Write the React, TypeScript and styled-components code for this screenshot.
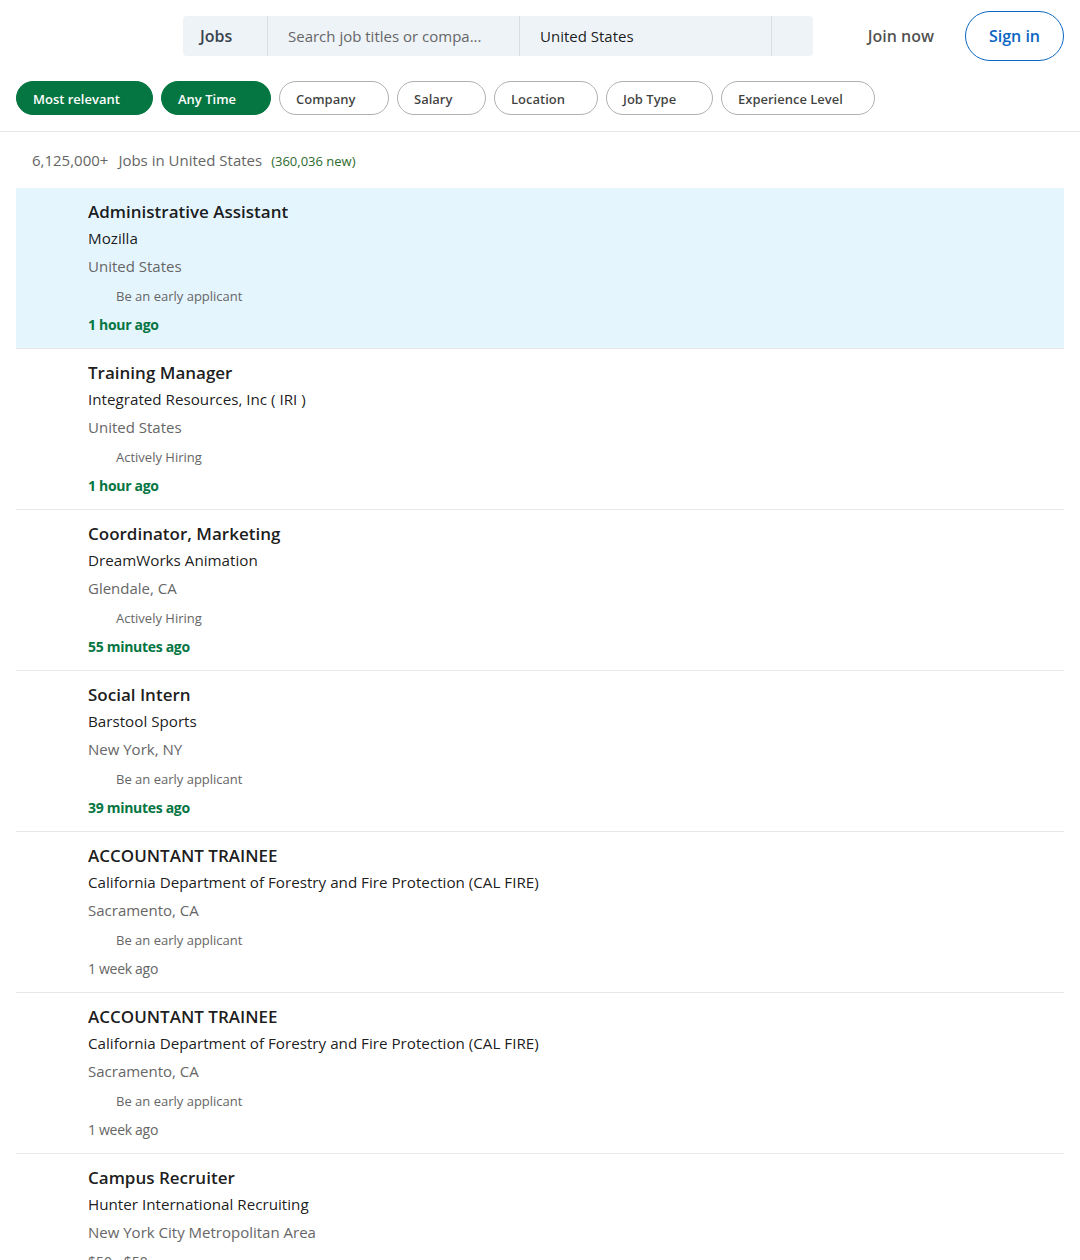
import React from "react";
import styled, { createGlobalStyle } from "styled-components";

const Global = createGlobalStyle`
  html, body { margin: 0; padding: 0; background: #fff; }
  body { font-family: "Open Sans", "Noto Sans", sans-serif; color: rgba(0,0,0,0.9); }
  * { box-sizing: border-box; }
`;

const Header = styled.header`
  display: flex;
  align-items: center;
  height: 72px;
  padding: 0 16px 0 183px;
`;

const SearchBar = styled.div`
  display: flex;
  width: 630px;
  height: 40px;
  background: #eef3f8;
  border-radius: 4px;
`;

const Segment = styled.div<{ $w: number; $pad: number; $last?: boolean }>`
  display: flex;
  align-items: center;
  width: ${(p) => p.$w}px;
  padding-left: ${(p) => p.$pad}px;
  border-right: ${(p) => (p.$last ? "none" : "1px solid #d9dde1")};
  font-size: 15px;
  white-space: nowrap;
`;

const JobsLabel = styled.span`
  font-size: 16px;
  font-weight: 600;
  color: #38434f;
`;

const Placeholder = styled.span`
  color: #666;
`;

const Value = styled.span`
  color: rgba(0,0,0,0.9);
`;

const Nav = styled.nav`
  margin-left: auto;
  display: flex;
  align-items: center;
  gap: 31px;
`;

const JoinNow = styled.a`
  font-size: 16px;
  font-weight: 600;
  color: rgba(0,0,0,0.7);
  text-decoration: none;
`;

const SignIn = styled.a`
  display: flex;
  align-items: center;
  justify-content: center;
  width: 99px;
  height: 50px;
  border: 1px solid #0a66c2;
  border-radius: 25px;
  font-size: 16px;
  font-weight: 600;
  color: #0a66c2;
  text-decoration: none;
`;

const Filters = styled.div`
  display: flex;
  gap: 8px;
  padding: 9px 16px 16px;
  border-bottom: 1px solid #e8e8e8;
`;

const Pill = styled.button<{ $active?: boolean; $w: number }>`
  height: 34px;
  width: ${(p) => p.$w}px;
  border-radius: 17px;
  border: 1px solid ${(p) => (p.$active ? "#057642" : "#b0b0b0")};
  background: ${(p) => (p.$active ? "#057642" : "#fff")};
  color: ${(p) => (p.$active ? "#fff" : "rgba(0,0,0,0.75)")};
  font-family: inherit;
  font-size: 13px;
  font-weight: 600;
  text-align: left;
  padding: 1px 0 0 16px;
  cursor: pointer;
`;

const Main = styled.main`
  padding: 0 16px;
`;

const Count = styled.div`
  display: flex;
  align-items: baseline;
  padding: 16px 16px 15px;
  font-size: 15px;
  line-height: 24px;
  color: #666;
`;

const CountNum = styled.span`
  margin-right: 10px;
`;

const NewCount = styled.span`
  margin-left: 9px;
  font-size: 13px;
  color: #2d6a2d;
`;

const List = styled.ul`
  list-style: none;
  margin: 0;
  padding: 0;
`;

const Card = styled.li<{ $active?: boolean }>`
  display: flex;
  flex-direction: column;
  padding: 12px 16px 13px 72px;
  background: ${(p) => (p.$active ? "#e5f5fe" : "#fff")};
  border-bottom: 1px solid #e8e8e8;
`;

const Title = styled.h3`
  margin: 0;
  font-size: 17px;
  line-height: 24px;
  font-weight: 600;
  color: rgba(0,0,0,0.9);
`;

const Company = styled.h4`
  margin: 2px 0 0;
  font-size: 15.2px;
  line-height: 24px;
  font-weight: 400;
  color: rgba(0,0,0,0.9);
`;

const Location = styled.span`
  margin-top: 4px;
  font-size: 15px;
  line-height: 24px;
  color: #666;
`;

const Salary = styled.span`
  margin-top: 8px;
  font-size: 14px;
  line-height: 20px;
  color: #666;
`;

const Insight = styled.span`
  margin-top: 8px;
  padding-left: 28px;
  font-size: 13px;
  line-height: 20px;
  color: #666;
`;

const Time = styled.time<{ $new?: boolean }>`
  margin-top: 9px;
  font-size: 14px;
  letter-spacing: -0.3px;
  line-height: 20px;
  font-weight: ${(p) => (p.$new ? 700 : 400)};
  color: ${(p) => (p.$new ? "#057642" : "#666")};
`;

const filters = [
  { label: "Most relevant", active: true, w: 137 },
  { label: "Any Time", active: true, w: 110 },
  { label: "Company", w: 110 },
  { label: "Salary", w: 89 },
  { label: "Location", w: 104 },
  { label: "Job Type", w: 107 },
  { label: "Experience Level", w: 154 },
];

type Job = {
  title: string;
  company: string;
  location: string;
  salary?: string;
  insight: string;
  time: string;
  isNew?: boolean;
};

const jobs: Job[] = [
  { title: "Administrative Assistant", company: "Mozilla", location: "United States", insight: "Be an early applicant", time: "1 hour ago", isNew: true },
  { title: "Training Manager", company: "Integrated Resources, Inc ( IRI )", location: "United States", insight: "Actively Hiring", time: "1 hour ago", isNew: true },
  { title: "Coordinator, Marketing", company: "DreamWorks Animation", location: "Glendale, CA", insight: "Actively Hiring", time: "55 minutes ago", isNew: true },
  { title: "Social Intern", company: "Barstool Sports", location: "New York, NY", insight: "Be an early applicant", time: "39 minutes ago", isNew: true },
  { title: "ACCOUNTANT TRAINEE", company: "California Department of Forestry and Fire Protection (CAL FIRE)", location: "Sacramento, CA", insight: "Be an early applicant", time: "1 week ago" },
  { title: "ACCOUNTANT TRAINEE", company: "California Department of Forestry and Fire Protection (CAL FIRE)", location: "Sacramento, CA", insight: "Be an early applicant", time: "1 week ago" },
  { title: "Campus Recruiter", company: "Hunter International Recruiting", location: "New York City Metropolitan Area", salary: "$50 - $50", insight: "Be an early applicant", time: "1 week ago" },
];

export default function App() {
  return (
    <>
      <Global />
      <Header>
        <SearchBar>
          <Segment $w={85} $pad={17}><JobsLabel>Jobs</JobsLabel></Segment>
          <Segment $w={252} $pad={20}><Placeholder>Search job titles or compa...</Placeholder></Segment>
          <Segment $w={252} $pad={20}><Value>United States</Value></Segment>
          <Segment $w={41} $pad={0} $last />
        </SearchBar>
        <Nav>
          <JoinNow href="#">Join now</JoinNow>
          <SignIn href="#">Sign in</SignIn>
        </Nav>
      </Header>
      <Filters>
        {filters.map((f) => (
          <Pill key={f.label} $active={f.active} $w={f.w}>{f.label}</Pill>
        ))}
      </Filters>
      <Main>
        <Count>
          <CountNum>6,125,000+</CountNum>
          <span>Jobs in United States</span>
          <NewCount>(360,036 new)</NewCount>
        </Count>
        <List>
          {jobs.map((j, i) => (
            <Card key={i} $active={i === 0}>
              <Title>{j.title}</Title>
              <Company>{j.company}</Company>
              <Location>{j.location}</Location>
              {j.salary && <Salary>{j.salary}</Salary>}
              <Insight>{j.insight}</Insight>
              <Time $new={j.isNew}>{j.time}</Time>
            </Card>
          ))}
        </List>
      </Main>
    </>
  );
}
